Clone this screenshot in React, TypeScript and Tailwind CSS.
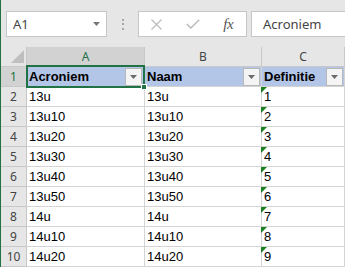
import React from "react";

const rows: [string, string, string][] = [
  ["13u", "13u", "1"],
  ["13u10", "13u10", "2"],
  ["13u20", "13u20", "3"],
  ["13u30", "13u30", "4"],
  ["13u40", "13u40", "5"],
  ["13u50", "13u50", "6"],
  ["14u", "14u", "7"],
  ["14u10", "14u10", "8"],
  ["14u20", "14u20", "9"],
];

function FilterButton() {
  return (
    <div className="w-[17px] h-[18px] shrink-0 border border-[#b8b8b8] bg-[#f4f4f4] flex items-center justify-center">
      <svg width="7" height="4" viewBox="0 0 7 4">
        <polygon points="0,0 7,0 3.5,4" fill="#6a6a6a" />
      </svg>
    </div>
  );
}

function GreenTri() {
  return (
    <svg className="absolute left-[-1px] top-0" width="6" height="6" viewBox="0 0 6 6">
      <polygon points="0,0 6,0 0,6" fill="#1e7e22" />
    </svg>
  );
}

export default function App() {
  const ui = "font-['Noto_Sans',sans-serif]";
  const cellFont = "font-['Liberation_Sans',Arial,sans-serif] text-[13px] leading-[19px] text-black";
  const cell = "border-r border-b border-[#d4d4d4] bg-white";
  const rowHead =
    "border-r border-b border-[#c8c8c8] bg-[#e6e6e6] flex items-center justify-center text-[12px] text-[#444] " + ui;
  return (
    <div className="w-[345px] h-[267px] overflow-hidden bg-white border-l border-[#217346] flex flex-col">
      {/* Formula bar */}
      <div className={"h-[47px] shrink-0 bg-[#e6e6e6] flex items-start pt-[11px] pl-[5px] " + ui}>
        <div className="w-[101px] h-[26px] shrink-0 bg-white border border-[#c6c6c6] flex items-center justify-between pl-[6px] pr-[6px]">
          <span className="text-[13px] text-[#444] leading-none">A1</span>
          <svg width="7" height="4" viewBox="0 0 7 4">
            <polygon points="0,0 7,0 3.5,4" fill="#777" />
          </svg>
        </div>
        <div className="w-[31px] h-[26px] shrink-0 flex flex-col items-center justify-center gap-[2.5px]">
          <div className="w-[2px] h-[2px] bg-[#a8a8a8]" />
          <div className="w-[2px] h-[2px] bg-[#a8a8a8]" />
          <div className="w-[2px] h-[2px] bg-[#a8a8a8]" />
        </div>
        <div className="w-[109px] h-[26px] shrink-0 bg-white border border-[#c6c6c6] flex items-center">
          <div className="w-[36px] h-full flex items-center justify-center">
            <svg width="11" height="11" viewBox="0 0 11 11">
              <path d="M0.5 0.5 L10.5 10.5 M10.5 0.5 L0.5 10.5" stroke="#bdbdbd" strokeWidth="1.3" fill="none" />
            </svg>
          </div>
          <div className="w-[36px] h-full flex items-center justify-center">
            <svg width="14" height="10" viewBox="0 0 14 10">
              <polyline points="0.8,5 4.8,9 13.2,0.8" stroke="#bdbdbd" strokeWidth="1.6" fill="none" />
            </svg>
          </div>
          <div className="w-[36px] h-full flex items-center justify-center">
            <span className="font-['Liberation_Serif',serif] italic text-[15px] text-[#555] leading-none tracking-[-0.5px]">
              fx
            </span>
          </div>
        </div>
        <div className="ml-[4px] w-[120px] h-[26px] shrink-0 bg-white border border-[#c6c6c6] flex items-center pl-[11px]">
          <span className="text-[13px] text-[#444] leading-none">Acroniem</span>
        </div>
      </div>

      {/* Grid */}
      <div className="grid grid-cols-[26px_118px_117px_83px] auto-rows-[20px]">
        {/* header row */}
        <div className="border-r border-b border-[#c8c8c8] bg-[#e6e6e6] relative">
          <svg className="absolute left-[10px] top-[3px]" width="13" height="13" viewBox="0 0 13 13">
            <polygon points="13,0 13,13 0,13" fill="#bfbfbf" />
          </svg>
        </div>
        <div className={"border-r border-b border-[#c8c8c8] bg-[#d2d2d2] flex items-center justify-center text-[12px] text-[#217346] " + ui}>
          A
        </div>
        <div className={"border-r border-b border-[#c8c8c8] bg-[#e6e6e6] flex items-center justify-center text-[12px] text-[#444] " + ui}>
          B
        </div>
        <div className={"border-r border-b border-[#c8c8c8] bg-[#e6e6e6] flex items-center justify-center text-[12px] text-[#444] " + ui}>
          C
        </div>

        {/* row 1 */}
        <div className={"border-r border-b border-[#c8c8c8] bg-[#d2d2d2] flex items-center justify-center text-[12px] text-[#217346] " + ui}>
          1
        </div>
        <div className={"relative border-r border-b border-[#d4d4d4] bg-[#b4c6e7] flex items-center justify-between pl-[2px] pr-[2px] " + cellFont}>
          <span className="font-bold">Acroniem</span>
          <FilterButton />
          <div className="absolute left-[-1px] top-[-2px] w-[119px] h-[23px] border-2 border-[#217346] pointer-events-none" />
          <div className="absolute left-[114px] top-[17px] w-[6px] h-[6px] bg-[#217346] border border-white z-10" />
        </div>
        <div className={"border-r border-b border-[#d4d4d4] bg-[#b4c6e7] flex items-center justify-between pl-[2px] pr-[1px] " + cellFont}>
          <span className="font-bold">Naam</span>
          <FilterButton />
        </div>
        <div className={"border-r border-b border-[#d4d4d4] bg-[#b4c6e7] flex items-center justify-between pl-[2px] pr-[1px] " + cellFont}>
          <span className="font-bold">Definitie</span>
          <FilterButton />
        </div>

        {rows.map((r, i) => (
          <React.Fragment key={i}>
            <div className={rowHead}>{i + 2}</div>
            <div className={cell + " pl-[2px] " + cellFont}>{r[0]}</div>
            <div className={cell + " pl-[2px] " + cellFont}>{r[1]}</div>
            <div className={cell + " relative pl-[2px] " + cellFont}>
              <GreenTri />
              {r[2]}
            </div>
          </React.Fragment>
        ))}
      </div>
    </div>
  );
}
